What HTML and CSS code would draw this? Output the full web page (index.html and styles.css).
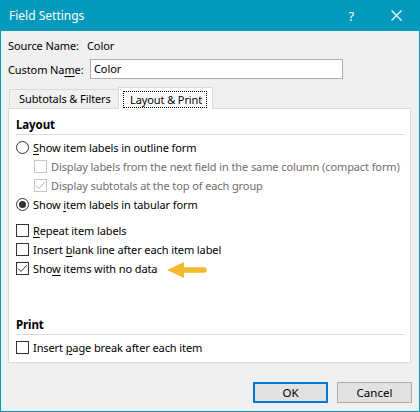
FILE: index.html
```html
<!DOCTYPE html>
<html>
<head>
<meta charset="utf-8">
<link rel="stylesheet" href="styles.css">
</head>
<body>
<div class="window">
  <div class="titlebar">
    <span class="title">Field Settings</span>
    <span class="help">?</span>
    <svg class="close" width="11" height="11" viewBox="0 0 11 11"><path d="M0.5 0.5 L10.5 10.5 M10.5 0.5 L0.5 10.5" stroke="#fff" stroke-width="1.1" fill="none"/></svg>
  </div>
  <div class="body">
    <div class="field-row source"><span class="label">Source Name:</span><span class="value">Color</span></div>
    <div class="field-row custom"><span class="label">Custom Na<u>m</u>e:</span><div class="input">Color</div></div>
    <div class="tabs">
      <div class="tab">Subtotals &amp; Filters</div>
      <div class="tab active"><span class="focus">Layout &amp; Print</span></div>
    </div>
    <div class="panel">
      <div class="section-title">Layout</div>
      <div class="opt first"><span class="radio"></span><span><u>S</u>how item labels in outline form</span></div>
      <div class="opt sub disabled"><span class="box"></span><span>Display labels from the next field in the same column (compact form)</span></div>
      <div class="opt sub disabled"><span class="box"><svg width="11" height="11" viewBox="0 0 11 11"><path d="M1 5.5 L4 8.5 L10 2" stroke="#b4b4b4" stroke-width="1" fill="none"/></svg></span><span>Display subtotals at the top of each group</span></div>
      <div class="opt"><span class="radio checked"></span><span>Show <u>i</u>tem labels in tabular form</span></div>
      <div class="opt group"><span class="box"></span><span><u>R</u>epeat item labels</span></div>
      <div class="opt"><span class="box"></span><span>Insert <u>b</u>lank line after each item label</span></div>
      <div class="opt"><span class="box"><svg width="11" height="11" viewBox="0 0 11 11"><path d="M1 5.5 L4 8.5 L10 2" stroke="#333" stroke-width="1" fill="none"/></svg></span><span>Sho<u>w</u> items with no data</span>
        <svg class="arrow" width="40" height="18" viewBox="0 0 40 18"><polygon points="0,9 17,1 17,17" fill="#f5b92e"/><path d="M16 9 H37" stroke="#f5b92e" stroke-width="5.5" stroke-linecap="round"/></svg>
      </div>
      <div class="section-title print">Print</div>
      <div class="opt first"><span class="box"></span><span>Insert <u>p</u>age break after each item</span></div>
    </div>
    <div class="buttons">
      <button class="btn default">OK</button>
      <button class="btn">Cancel</button>
    </div>
  </div>
</div>
</body>
</html>
```

FILE: styles.css
```css
* { box-sizing: border-box; }
body {
  margin: 0;
  font-family: "Noto Sans", "Liberation Sans", sans-serif;
  font-size: 11px;
  letter-spacing: -0.1px;
  color: #000;
}
u { text-decoration: underline; text-underline-offset: 2px; }
.window {
  width: 420px;
  height: 412px;
  background: #f0f0f0;
  border: 1px solid #0399bc;
  border-top: none;
  overflow: hidden;
}
.titlebar {
  height: 31px;
  margin: 0 -1px;
  background: #0399bc;
  color: #fff;
  display: flex;
  align-items: center;
  padding-left: 9px;
}
.title { flex: 1; font-size: 12px; letter-spacing: 0; }
.help { font-size: 13px; margin-right: 37px; }
.close { margin-right: 18px; }
.body { padding: 5px 7px 8px 7px; }
.field-row { display: flex; align-items: center; white-space: nowrap; }
.label { flex: none; }
.source { height: 19px; }
.source .label { width: 79px; }
.custom { height: 20px; margin-top: 4px; }
.custom .label { width: 82px; }
.input {
  flex: none;
  width: 253px;
  height: 20px;
  border: 1px solid #adadad;
  background: #fff;
  padding-left: 3px;
  line-height: 18px;
}
.tabs {
  margin-top: 8px;
  height: 21px;
  display: flex;
  align-items: flex-end;
  padding-left: 1px;
  white-space: nowrap;
}
.tab {
  flex: none;
  height: 19px;
  width: 110px;
  border: 1px solid #d9d9d9;
  border-bottom: none;
  background: #f0f0f0;
  padding-left: 9px;
  line-height: 18px;
}
.tab.active {
  position: relative;
  width: 95px;
  height: 22px;
  margin-left: -1px;
  margin-bottom: -1px;
  background: #fff;
  padding: 3px 0 0 4px;
}
.focus {
  display: inline-block;
  width: 84px;
  height: 17px;
  line-height: 15px;
  border: 1px dotted #000;
  padding: 0 0 0 6px;
}
.panel {
  width: 403px;
  border: 1px solid #d9d9d9;
  background: #fff;
  padding: 7px 0 5px 7px;
}
.section-title {
  font-weight: bold;
  font-size: 11.5px;
  height: 19px;
  line-height: 18px;
  border-bottom: 1px solid #dcdcdc;
  margin-right: 5px;
}
.section-title.print { margin-top: 38px; }
.opt { display: flex; align-items: center; height: 19px; white-space: nowrap; }
.opt.first { margin-top: 3px; }
.opt.group { margin-top: 7px; }
.opt.sub { padding-left: 18px; }
.opt.disabled { color: #6d6d6d; }
.box, .radio {
  width: 13px;
  height: 13px;
  border: 1px solid #333;
  background: #fff;
  margin-right: 4px;
  flex: none;
  display: flex;
  align-items: center;
  justify-content: center;
}
.disabled .box { border-color: #c4c4c4; }
.radio { border-radius: 50%; }
.radio.checked::after {
  content: "";
  width: 7px;
  height: 7px;
  border-radius: 50%;
  background: #333;
}
.arrow { margin-left: 10px; margin-top: 2px; flex: none; }
.buttons {
  margin-top: 19px;
  display: flex;
  justify-content: flex-end;
  gap: 9px;
}
.btn {
  width: 75px;
  height: 21px;
  font-family: inherit;
  font-size: 11.5px;
  background: #e1e1e1;
  border: 1px solid #adadad;
  padding: 0;
  color: #000;
}
.btn.default { border: 2px solid #0078d7; }
```
